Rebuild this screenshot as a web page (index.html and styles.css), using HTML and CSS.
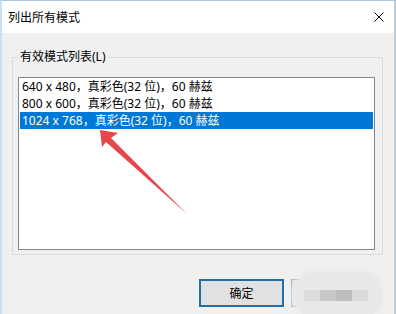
FILE: index.html
```html
<!DOCTYPE html>
<html lang="zh-CN">

<head>
    <meta charset="UTF-8">
    <meta name="viewport" content="width=device-width, initial-scale=1.0">
    <title>列出所有模式</title>

    <link rel="stylesheet" href="styles.css">
</head>

<body>
    <div class="window">
        <div class="titlebar">
            <span class="title">列出所有模式</span>
            <span class="close">
                <svg width="10" height="10" viewBox="0 0 10 10">
                    <path d="M0.5 0.5 L9.5 9.5 M9.5 0.5 L0.5 9.5" stroke="#000" stroke-width="1" fill="none" />
                </svg>
            </span>
        </div>

        <fieldset class="group">
            <legend class="legend">有效模式列表(L)</legend>
            <ul class="modes">
                <li class="mode">640 x 480，真彩色(32 位)，60 赫兹</li>
                <li class="mode">800 x 600，真彩色(32 位)，60 赫兹</li>
                <li class="mode selected">1024 x 768，真彩色(32 位)，60 赫兹</li>
            </ul>
        </fieldset>

        <div class="buttons">
            <button class="btn default">确定</button>
            <button class="btn">取消</button>
            <!-- blurred watermark over the second button -->
            <div class="blur">
                <span class="cell c1"></span>
                <span class="cell c2"></span>
                <span class="cell c3"></span>
                <span class="cell c4"></span>
            </div>
        </div>

        <svg class="arrow" width="396" height="314" viewBox="0 0 396 314">
            <polygon points="100,130 118,133 111,138 187,214 106,142 102,147" fill="#e5474b" />
        </svg>
    </div>
</body>

</html>
```

FILE: styles.css
```css
body {
    margin: 0;
    background-color: #fff;
    font-family: "Noto Sans", "Noto Sans CJK SC", sans-serif;
    font-size: 12px;
    color: #000;
}

.window {
    position: relative;
    width: 396px;
    height: 314px;
    box-sizing: border-box;
    border-top: 1px solid #a6c8e4;
    border-left: 2px solid #c6e0f4;
    border-right: 2px solid #b6cfe3;
    background-color: #f0f0f0;
    overflow: hidden;
}

.titlebar {
    display: flex;
    align-items: center;
    justify-content: space-between;
    height: 32px;
    padding-left: 6px;
    background-color: #fff;
}

.close {
    display: flex;
    margin-right: 10px;
}

.group {
    margin: 16px 11px 0 10px;
    padding: 12px 7px 4px 5px;
    border: 1px solid #dcdcdc;
    min-width: 0;
}

.legend {
    padding: 0 2px;
    line-height: 16px;
}

.modes {
    list-style: none;
    margin: 0;
    padding: 0 1px;
    height: 171px;
    border: 1px solid #828790;
    background-color: #fff;
}

.mode {
    height: 17px;
    line-height: 17px;
    padding-left: 2px;
    white-space: nowrap;
}

.selected {
    background-color: #0078d7;
    color: #fff;
}

.buttons {
    position: relative;
    display: flex;
    justify-content: flex-end;
    gap: 7px;
    margin-top: 24px;
    padding-right: 16px;
}

.btn {
    width: 87px;
    height: 28px;
    padding: 0;
    border: 1px solid #adadad;
    background-color: #e1e1e1;
    font-family: inherit;
    font-size: 12px;
    color: #000;
}

.default {
    width: 85px;
    border: 2px solid #1f6fae;
}

.blur {
    position: absolute;
    right: 12px;
    top: -8px;
    width: 88px;
    height: 48px;
    border-radius: 24px;
    background-color: #e8e8e8;
    box-shadow: 0 0 5px 3px #ececec;
    display: flex;
    align-items: center;
    padding-left: 10px;
    box-sizing: border-box;
}

.cell {
    width: 16px;
    height: 11px;
    background-color: #dcdcdc;
}

.c2 {
    background-color: #c8c8c8;
}

.c3 {
    background-color: #bdbdbd;
}

.c4 {
    background-color: #dadada;
}

.arrow {
    position: absolute;
    left: -2px;
    top: -1px;
    pointer-events: none;
}
```
